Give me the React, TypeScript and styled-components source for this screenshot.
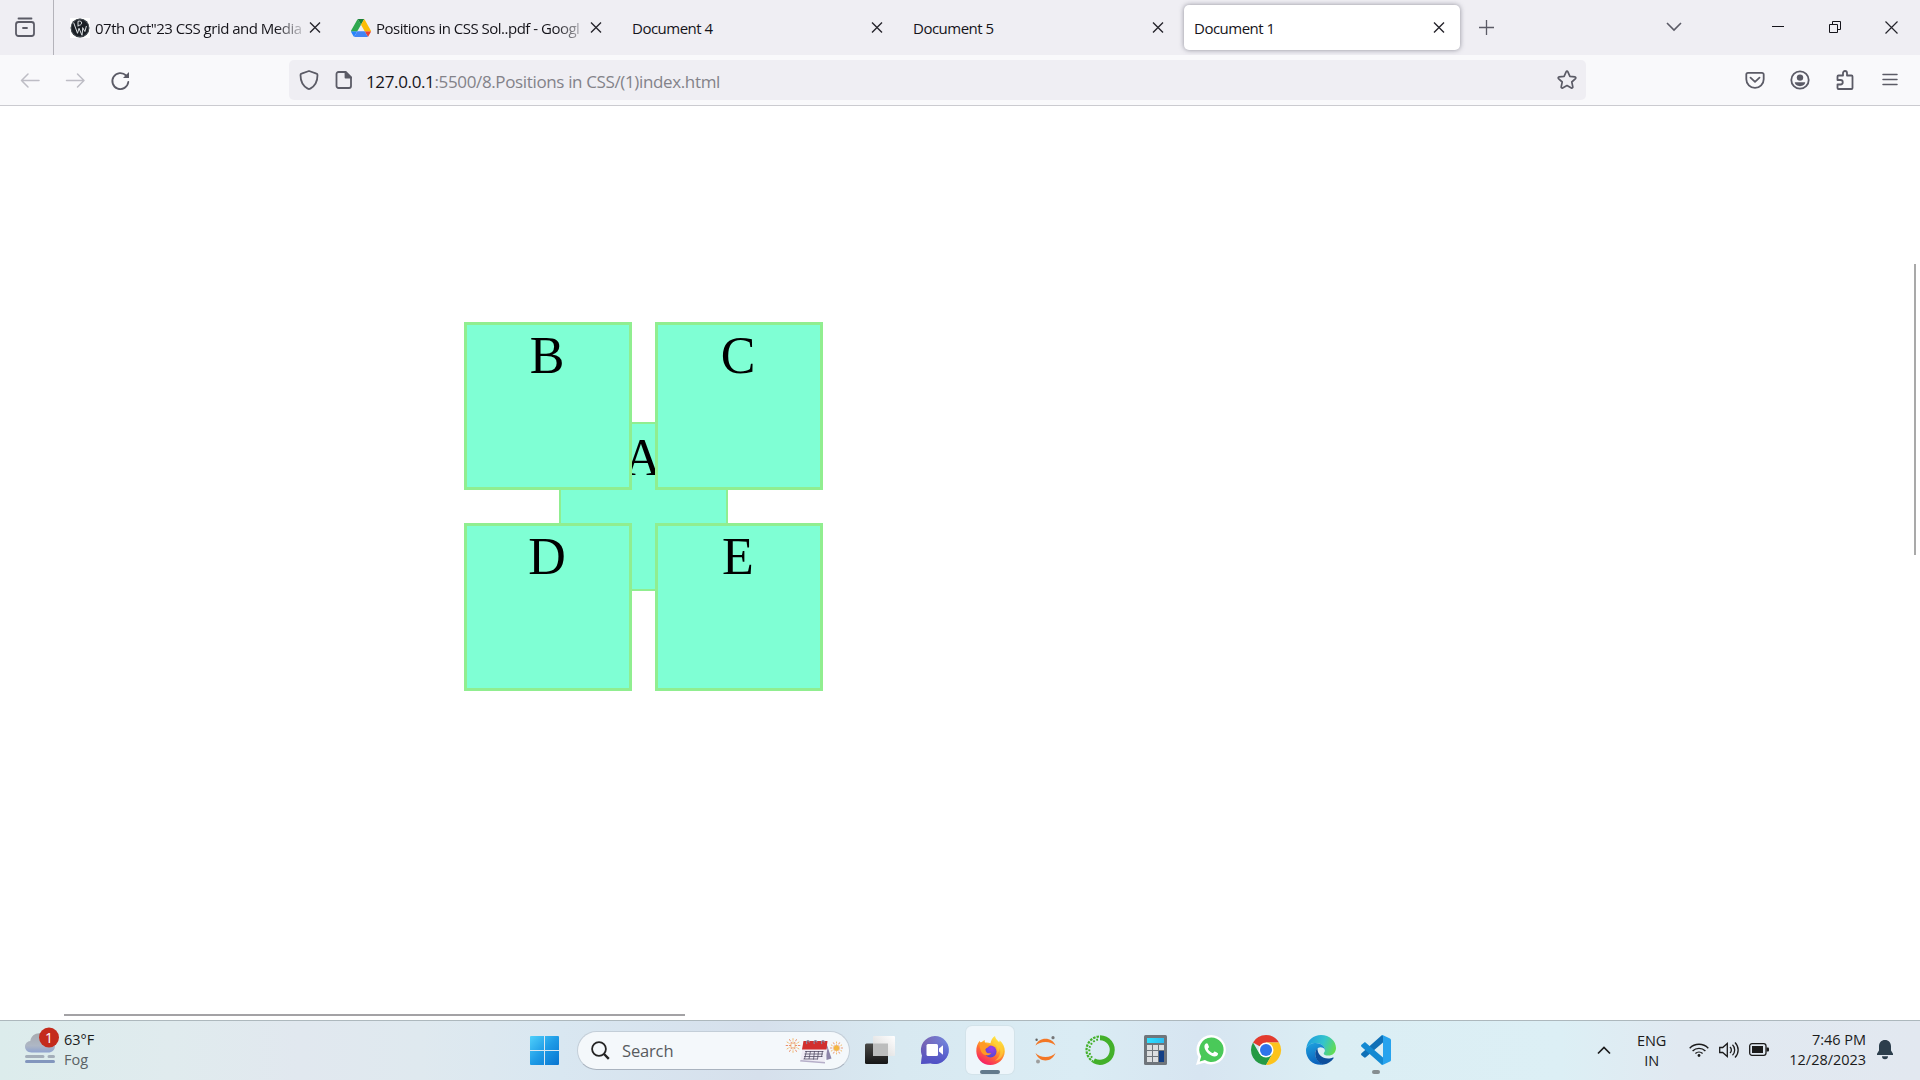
import React from "react";
import styled, { createGlobalStyle } from "styled-components";

const GlobalStyle = createGlobalStyle`
  * { box-sizing: border-box; }
  html, body { margin: 0; padding: 0; overflow: hidden; }
  body { font-family: "Segoe UI", "Open Sans", "Noto Sans", sans-serif; color: #15141a; }
  svg { display: block; flex: none; overflow: visible; }
`;

const Screen = styled.div`
  width: 1920px;
  height: 1080px;
  display: flex;
  flex-direction: column;
  background: #fff;
`;

/* ---------- tab strip ---------- */
const TabStrip = styled.div`
  height: 55px;
  flex: none;
  display: flex;
  background: #efeef3;
`;
const ViewButton = styled.div`
  width: 54px;
  height: 55px;
  padding: 17px 0 0 15px;
  border-right: 1px solid #b4b3ba;
`;
const Tabs = styled.div`
  display: flex;
  gap: 5px;
  padding: 5px 0 0 6px;
`;
const Tab = styled.div<{ $active?: boolean }>`
  width: 276px;
  height: 45px;
  padding: 0 15px 0 10px;
  display: flex;
  align-items: center;
  border-radius: 5px;
  background: ${(p) => (p.$active ? "#fff" : "transparent")};
  box-shadow: ${(p) => (p.$active ? "0 0 5px rgba(90, 90, 105, 0.65)" : "none")};
`;
const Favicon = styled.div`
  width: 20px;
  height: 20px;
  margin-right: 5px;
  flex: none;
`;
const TabTitle = styled.div<{ $fade?: boolean }>`
  flex: 1;
  min-width: 0;
  overflow: hidden;
  white-space: nowrap;
  font-size: 15px;
  line-height: 24px;
  padding-top: 1px;
  letter-spacing: -0.5px;
  mask-image: ${(p) => (p.$fade ? "linear-gradient(to left, transparent, #000 34px)" : "none")};
`;
const NewTab = styled.div`
  padding: 20px 0 0 19px;
`;
const WindowControls = styled.div`
  margin-left: auto;
  padding: 21px 22px 0 0;
  display: flex;
`;
const ControlSlot = styled.div<{ $gap: number }>`
  margin-right: ${(p) => p.$gap}px;
`;

/* ---------- navigation bar ---------- */
const NavBar = styled.div`
  height: 51px;
  flex: none;
  display: flex;
  align-items: flex-start;
  background: #f9f9fb;
  border-bottom: 1px solid #cbcbd0;
  padding: 5px 20px 0 20px;
`;
const NavButtons = styled.div`
  width: 269px;
  height: 40px;
  display: flex;
  align-items: center;
  gap: 25px;
`;
const UrlBar = styled.div`
  width: 1297px;
  height: 40px;
  display: flex;
  align-items: center;
  border-radius: 5px;
  background: #efeef3;
  padding: 0 9px 0 10px;
`;
const UrlText = styled.div`
  margin-left: 13px;
  flex: 1;
  padding-top: 2px;
  white-space: nowrap;
  font-size: 17px;
  letter-spacing: -0.36px;
  color: #838289;
  b { font-weight: 400; color: #15141a; }
`;
const UrlIcons = styled.div`
  display: flex;
  align-items: center;
  gap: 16px;
`;
const ToolButtons = styled.div`
  height: 40px;
  flex: 1;
  display: flex;
  align-items: center;
  justify-content: flex-end;
  gap: 25px;
`;

/* ---------- page ---------- */
const Page = styled.main`
  flex: 1;
  position: relative;
  padding: 216px 0 0 464px;
  background: #fff;
`;
const Board = styled.div`
  position: relative;
  display: grid;
  grid-template-columns: 168px 168px;
  grid-auto-rows: 168px;
  gap: 33px 23px;
`;
const Box = styled.div`
  position: relative;
  background: aquamarine;
  border: 3px solid lightgreen;
  padding: 2px 2px 0 0;
  font: 52px/58px "Times New Roman", "Liberation Serif", serif;
  color: #000;
  text-align: center;
`;
const CenterBox = styled(Box)`
  position: absolute;
  left: 95px;
  top: 100px;
  width: 169px;
  height: 169px;
  border-width: 2px;
  padding-top: 5px;
`;
const VerticalThumb = styled.div`
  position: absolute;
  right: 4px;
  top: 158px;
  width: 2px;
  height: 291px;
  background: #a9a9a9;
`;
const HorizontalThumb = styled.div`
  position: absolute;
  left: 64px;
  bottom: 4px;
  width: 621px;
  height: 2px;
  background: #a3a2a5;
`;

/* ---------- taskbar ---------- */
const Taskbar = styled.footer`
  height: 60px;
  flex: none;
  display: flex;
  align-items: flex-start;
  border-top: 1px solid #adb8bd;
  background: linear-gradient(90deg, #dcecec 0, #e0ebee 170px, #e1e8ef 300px, #dfe9ef 420px, #d9e7f1 560px, #d6e0ec 760px, #d8e9f1 900px, #daecf4 1080px, #d7e5f1 1200px, #dbeef4 1330px, #dceff5 1560px, #e1e9f1 1680px, #e2e8f0 1920px);
`;
const Weather = styled.div`
  width: 530px;
  padding: 6px 0 0 25px;
  display: flex;
  gap: 5px;
`;
const Lines = styled.div<{ $align?: string; $top?: number }>`
  padding-top: ${(p) => p.$top ?? 2}px;
  font-size: 14.5px;
  line-height: 20px;
  letter-spacing: -0.03px;
  text-align: ${(p) => p.$align ?? "left"};
  white-space: nowrap;
  color: #1b1b1b;
  span { display: block; }
`;
const Muted = styled.span`
  color: #5a6264;
`;
const Start = styled.div`
  padding: 15px 18px 0 0;
`;
const Search = styled.div`
  width: 273px;
  height: 39px;
  margin: 10px 2.5px 0 0;
  border-radius: 20px;
  border: 1px solid #c3ced8;
  border-bottom-color: #a9b3bf;
  background: #f4f8fb;
  display: flex;
  align-items: center;
  padding: 0 4px 1px 13px;
`;
const SearchText = styled.div`
  flex: 1;
  margin-left: 12px;
  padding-top: 1px;
  font-size: 16.5px;
  letter-spacing: -0.15px;
  color: #585b5e;
`;
const AppSlot = styled.div<{ $active?: boolean }>`
  position: relative;
  width: 48px;
  height: 48px;
  margin: 5px 3.55px 0;
  display: flex;
  align-items: center;
  justify-content: center;
  border-radius: 6px;
  background: ${(p) => (p.$active ? "#eef6fb" : "transparent")};
  box-shadow: ${(p) => (p.$active ? "0 0 0 1px #d3e3ea" : "none")};
`;
const Running = styled.div<{ $w: number; $c: string }>`
  position: absolute;
  left: calc(50% - ${(p) => p.$w / 2}px);
  bottom: 0;
  width: ${(p) => p.$w}px;
  height: 4px;
  border-radius: 2px;
  background: ${(p) => p.$c};
`;
const Tray = styled.div`
  margin-left: auto;
  padding-right: 27px;
  display: flex;
  align-items: center;
  height: 57px;
`;
const TrayItem = styled.div<{ $gap: number }>`
  margin-right: ${(p) => p.$gap}px;
`;

const CloseX = () => (
  <svg width="12" height="12" viewBox="0 0 12 12">
    <path d="M1 .5l10 10M11 .5L1 10.500" stroke="#25242b" strokeWidth="1.35" />
  </svg>
);

const WordFavicon = () => (
  <svg width="20" height="20" viewBox="0 0 20 20">
    <rect width="20" height="20" fill="#fff" />
    <circle cx="10" cy="10" r="9.4" fill="#1b2025" />
    <path d="M8 8.500V3.300c2.400-.7 3.900.1 3.600 1.900-.2 1.500-1.700 2.300-3.500 2.200M3.600 4.500l3.900 10.800 1.500-5 3 7 .8-7.500M12.500 9.500l2.400 4 1.500-5.500" fill="none" stroke="#dfe3e5" strokeWidth="1" />
    <circle cx="10" cy="10" r="8.8" fill="none" stroke="#626a70" strokeWidth=".6" />
  </svg>
);
const DriveFavicon = () => (
  <svg width="20" height="20" viewBox="0 0 87.3 78">
    <path d="m6.600 66.850 3.850 6.650c.8 1.400 1.950 2.500 3.300 3.300l13.750-23.800h-27.500c0 1.550.4 3.100 1.200 4.500z" fill="#2684fc" />
    <path d="m43.650 25-13.750-23.800c-1.350.8-2.500 1.900-3.300 3.300l-25.400 44a9.060 9.060 0 0 0 -1.200 4.500h27.500z" fill="#2fa84f" />
    <path d="m73.550 76.800c1.350-.8 2.500-1.900 3.300-3.300l1.600-2.750 7.650-13.250c.8-1.400 1.200-2.950 1.200-4.500h-27.502l5.852 11.500z" fill="#ea4335" />
    <path d="m43.650 25 13.750-23.800c-1.350-.8-2.900-1.200-4.500-1.200h-18.500c-1.600 0-3.150.45-4.500 1.200z" fill="#188038" />
    <path d="m59.800 53h-32.300l-13.750 23.800c1.350.8 2.900 1.200 4.500 1.200h50.800c1.600 0 3.150-.45 4.500-1.200z" fill="#4285f4" />
    <path d="m73.400 26.500-12.700-22c-.8-1.400-1.950-2.500-3.300-3.300l-13.750 23.800 16.150 28h27.450c0-1.550-.4-3.100-1.200-4.500z" fill="#fbbc04" />
  </svg>
);

const line = { fill: "none", stroke: "#5b5b66", strokeWidth: 1.8, strokeLinecap: "round", strokeLinejoin: "round" } as const;

const FogIcon = () => (
  <svg width="34" height="38" viewBox="0 0 34 38">
    <defs>
      <linearGradient id="fog" x1="0" y1="0" x2="0" y2="1"><stop offset="0" stopColor="#a7abb0" /><stop offset=".65" stopColor="#aeb7c5" /><stop offset="1" stopColor="#8ea2cf" /></linearGradient>
    </defs>
    <path d="M6.500 25.500C2.500 25.500 0 22.800 0 19.600c0-3 2.300-5.400 5.300-5.700C6 9.200 9.700 6.200 14.200 6.200c4.300 0 7.600 2.500 8.800 6.200 4.200.2 7 3 7 6.500 0 3.800-2.900 6.600-6.800 6.600z" fill="url(#fog)" />
    <path d="M1.500 29.500h16.500M24 29.500h4.500" stroke="#a3aeba" strokeWidth="3" strokeLinecap="round" />
    <path d="M1.500 34.500h27" stroke="#8296bd" strokeWidth="3" strokeLinecap="round" />
    <circle cx="24" cy="10.500" r="10" fill="#c42b1c" />
    <text x="24" y="15.800" textAnchor="middle" fontSize="14" fill="#fff" fontFamily="Open Sans, sans-serif">1</text>
  </svg>
);

const rays = Array.from({ length: 12 }, (_, i) => (i * Math.PI) / 6);
const Burst = ({ x, y, r }: { x: number; y: number; r: number }) => (
  <g strokeLinecap="round">
    {rays.map((a, i) => (
      <path
        key={i}
        d={`M${x + Math.cos(a) * r * 0.3} ${y + Math.sin(a) * r * 0.3}L${x + Math.cos(a) * r} ${y + Math.sin(a) * r}`}
        stroke={i % 2 ? "#f2b45e" : "#e8835f"}
        strokeWidth=".9"
        strokeDasharray="1.500 1.700"
      />
    ))}
  </g>
);
const CalendarArt = () => (
  <svg width="60" height="28" viewBox="0 0 60 28">
    <Burst x={8} y={9.500} r={7.200} />
    <path d="M41 6l5.500 16.500-5 1.500z" fill="#8d84a8" />
    <path d="M17.500 12.500h25l-3 13.500-24-2z" fill="#efecf5" />
    <path d="M15.500 24l24.500 2v1.500l-25-2z" fill="#b6afc9" />
    <path d="M18.500 5h24l-1 8.500H17z" fill="#d22f2f" />
    <path d="M20 15.500h18.500M19.500 18h18.500M19 20.500h18.500M18.500 23h14M21.500 15l-2 8M25.500 15l-1.500 8M29.500 15l-1 8.500M33.500 15l-1 8.500M37.500 15l-1 6" stroke="#4d4860" strokeWidth=".75" />
    <path d="M22 8c-2-3 2-5 2.500-1.500M29.500 8c-2-3 2-5 2.500-1.500M37 8c-2-3 2-5 2.500-1.500" fill="none" stroke="#8a86a0" strokeWidth="1.200" />
    <Burst x={51.500} y={12} r={6} />
    <circle cx="51.500" cy="12" r="2.600" fill="#f4b73f" />
  </svg>
);

const TaskViewIcon = () => (
  <svg width="30" height="28" viewBox="0 0 30 28">
    <defs>
      <linearGradient id="tv1" x1="0" y1="0" x2="0" y2="1"><stop offset="0" stopColor="#4a4a48" /><stop offset="1" stopColor="#161616" /></linearGradient>
      <linearGradient id="tv2" x1="0" y1="1" x2="1" y2="0"><stop offset="0" stopColor="#d5d5d5" /><stop offset="1" stopColor="#fff" /></linearGradient>
    </defs>
    <rect x="0" y="7.500" width="23" height="20.500" rx="1.500" fill="url(#tv1)" />
    <rect x="8" y="0" width="22" height="20" rx="1" fill="url(#tv2)" />
    <rect x="8" y="7.500" width="15" height="12.500" fill="#bcbdbd" />
  </svg>
);
const ChatIcon = () => (
  <svg width="28" height="28" viewBox="0 0 28 28">
    <defs>
      <linearGradient id="chat" x1="0" y1="0" x2="1" y2="0"><stop offset="0" stopColor="#7a62b0" /><stop offset="1" stopColor="#6f86e0" /></linearGradient>
      <linearGradient id="chat2" x1="0" y1="0" x2="0" y2="1"><stop offset=".2" stopColor="#4b4fc4" stopOpacity="0" /><stop offset="1" stopColor="#4f50c6" /></linearGradient>
    </defs>
    <path d="M14 0a14 14 0 1 1-4.500 27.300L0 28l1-8.500A14 14 0 0 1 14 0z" fill="url(#chat)" />
    <path d="M14 0a14 14 0 1 1-4.500 27.300L0 28l1-8.500A14 14 0 0 1 14 0z" fill="url(#chat2)" />
    <rect x="5.500" y="8" width="11.500" height="12" rx="1.500" fill="#fff" />
    <path d="M18 12.500l4-3.200v9.400l-4-3.200z" fill="#fff" />
  </svg>
);
const FirefoxIcon = () => (
  <svg width="29" height="29" viewBox="0 0 29 29">
    <defs>
      <linearGradient id="ff1" x1=".8" y1="0" x2=".25" y2="1"><stop offset="0" stopColor="#fff44f" /><stop offset=".35" stopColor="#ffb92b" /><stop offset=".62" stopColor="#ff6a36" /><stop offset="1" stopColor="#f5156c" /></linearGradient>
      <radialGradient id="ff2" cx=".6" cy=".25" r=".8"><stop offset="0" stopColor="#a23be8" /><stop offset="1" stopColor="#4a4cd0" /></radialGradient>
    </defs>
    <path d="M19 0c.3 2.600 2 4 4 6 .6-.4.700-1 .5-1.800 3.400 2.800 5.500 6.600 5.300 11.300C28.500 23.200 22 29 14.300 29 6.500 29 .5 23 .3 15.300.2 11.500 1.400 7.400 3.700 4.800c.2 1 .5 1.600 1 2.200C6.600 5 8.500 4 8.800 4c-.2 1-.1 1.800.3 2.500 2.200-.2 3.800 0 5.400.7C15 4 16.500 1.500 19 0z" fill="url(#ff1)" />
    <circle cx="14.500" cy="15.500" r="6" fill="url(#ff2)" />
    <path d="M3.700 6.500C6.500 5.700 9.500 6.500 11 8.500c1.600-.3 3 .4 3.500 1.300-1.500.3-2 .9-2.900 1.700-.8.600-2 1-2.200 1.900.4 3.600 3 4.600 5.900 3.500-1.400 2.500-5.200 3.200-8 1.300C4.600 16.200 3.200 11 3.700 6.500z" fill="#ff9a24" />
    <path d="M17 7.500c3.800 1.500 5.200 5.500 4.200 9.500 2-1.500 2.500-4 2-6 2.500 5 .5 11-4.500 13.500 7 0 10-7 7.500-13.500-2-1.500-5-3.500-7-6-.7.700-1.600 1.500-2.200 2.500z" fill="#ffd43a" opacity=".6" />
  </svg>
);
const JupyterIcon = () => (
  <svg width="21" height="28" viewBox="0 0 21 28">
    <path d="M.5 9.500C2.500 5 6 2.800 10.500 2.800S18.500 5 20.500 9.500C18 7.200 14.500 6 10.500 6S3 7.200.5 9.500zM.5 17c2.500 2.600 6 4 10 4s7.500-1.400 10-4c-2 4.800-5.500 7.500-10 7.500S2.500 21.800.5 17z" fill="#f37726" />
    <circle cx="18" cy="1.700" r="1.600" fill="#767677" /><circle cx="1.600" cy="3.700" r="1.200" fill="#616262" /><circle cx="3" cy="25.500" r="2" fill="#9e9e9e" />
  </svg>
);
const AnacondaIcon = () => (
  <svg width="30" height="30" viewBox="0 0 30 30">
    <path d="M15 2.700a12.300 12.300 0 1 1-6.300 22.900" fill="none" stroke="#43b02a" strokeWidth="5" />
    <path d="M14 1.500a13.500 13.500 0 0 0-6 25" fill="none" stroke="#43b02a" strokeWidth="2.200" strokeDasharray="2.500 1.100" />
    <path d="M13 4.500a11 11 0 0 0-5 19" fill="none" stroke="#43b02a" strokeWidth="2" strokeDasharray="1.800 1.700" />
  </svg>
);
const CalculatorIcon = () => (
  <svg width="23" height="30" viewBox="0 0 23 30">
    <defs><linearGradient id="calc" x1="0" y1="0" x2="1" y2="0"><stop offset="0" stopColor="#2ee0ff" /><stop offset="1" stopColor="#2bbcf0" /></linearGradient></defs>
    <rect width="23" height="30" rx="1.500" fill="#6f757b" />
    <rect x="3" y="3" width="17" height="5" fill="url(#calc)" />
    {[10, 16, 22].map((y) => [3, 9, 15].map((x) => (x === 15 && y > 10 ? null : <rect key={`${x}${y}`} x={x} y={y} width="5" height="5" fill="#dcdee0" />)))}
    <rect x="15" y="16" width="5" height="11" fill="#123f86" />
  </svg>
);
const WhatsAppIcon = () => (
  <svg width="30" height="30" viewBox="0 0 30 30">
    <path d="M15.200 0a14.700 14.700 0 1 1-6.900 27.700L0 30l2.400-8A14.700 14.700 0 0 1 15.200 0z" fill="#fff" />
    <path d="M15.200 2.600a12.200 12.200 0 1 1-6.300 22.500L3.700 26.400l1.500-5A12.200 12.200 0 0 1 15.200 2.600z" fill="#4ac959" />
    <path d="M11 8.200c-1.500 0-2.600 1.600-2.600 3.300 0 4.600 6 9.900 10.300 9.900 1.700 0 3.400-1.300 3.400-3 0-.4-3.100-2-3.500-2-.6 0-1.200 1.700-1.700 1.700-1.600 0-5-3.100-5-4.300 0-.5 1.100-1.100 1.100-1.700 0-.5-1.200-3.900-2-3.900z" fill="#fff" />
  </svg>
);
const ChromeIcon = () => (
  <svg width="30" height="30" viewBox="0 0 30 30">
    <path d="M15 15L2.010 7.500A15 15 0 0 1 28 7.500L15 7.500z" fill="#e33b2e" />
    <path d="M2.010 7.500A15 15 0 0 0 15 30l6.500-11.250L15 15l-6.500 3.750z" fill="#249a45" />
    <path d="M28 7.500A15 15 0 0 1 15 30l6.500-11.250L15 15V7.500z" fill="#fcc31c" />
    <circle cx="15" cy="15" r="7.500" fill="#fff" /><circle cx="15" cy="15" r="6" fill="#2f74ea" />
  </svg>
);
const EdgeIcon = () => (
  <svg width="30" height="30" viewBox="0 0 30 30">
    <defs>
      <linearGradient id="ed1" x1="0" y1=".3" x2="1" y2=".6"><stop offset="0" stopColor="#1f9ee0" /><stop offset=".55" stopColor="#34c4cc" /><stop offset="1" stopColor="#62dc50" /></linearGradient>
      <linearGradient id="ed2" x1="0" y1="0" x2=".3" y2="1"><stop offset="0" stopColor="#1fa4e0" /><stop offset="1" stopColor="#0a63bd" /></linearGradient>
    </defs>
    <path d="M.3 13C1.400 5 7.600 0 15 0c8.600 0 15 6 15 13 0 4.500-3.500 7.600-7.500 7.600-3.400 0-4.800-1.300-4.800-2.200 0-.8 1.200-1.200 1.200-3.500 0-4-4.200-7-9-7C5.500 7.900 2 10 .3 13z" fill="url(#ed1)" />
    <path d="M.3 13C2 9.500 5.800 7.900 9.800 7.900c5 0 9.100 3 9.100 7-1-2-2.700-2.600-4.400-2.600-3 0-5.300 3-5.300 6.700 0 5 4 8.800 8.800 10.500C8 31.500 0 24.500 0 15.500 0 14.500.1 13.700.3 13z" fill="url(#ed2)" />
    <path d="M11.500 13.300c-1.500 1.300-2.300 3.300-2.300 5.700 0 5.500 4.300 9.900 8.800 10.500 3.900-.7 7.500-3 9.600-6.200.3-.6-.2-1-.8-.7-1.200.6-2.800 1-4.600 1-6.400 0-11-4.600-10.700-10.300z" fill="#0d4f9c" />
  </svg>
);
const CodeIcon = () => (
  <svg width="30" height="30" viewBox="0 0 30 30">
    <path d="M22 7.500L4.800 22.300c-.6.500-1.300.5-1.800 0L.5 20.200c-.6-.5-.6-1.400 0-2L20.500.5 22 0z" fill="#0f70b7" />
    <path d="M22 22.500L4.800 7.700c-.6-.5-1.300-.5-1.800 0L.5 9.800c-.6.500-.6 1.400 0 2L20.500 29.500l1.500.5z" fill="#1389d2" />
    <path d="M21.500 0L29 3.400c.6.300 1 .9 1 1.600v20c0 .7-.4 1.300-1 1.600L21.500 30c-.8.100-1.300-.300-1.600-.700.9.6 2.100 0 2.100-1.200V1.900c0-1.200-1.200-1.800-2.100-1.200.3-.4.800-.8 1.600-.7z" fill="#27a3ee" />
  </svg>
);

const apps = [
  { icon: <TaskViewIcon /> },
  { icon: <ChatIcon /> },
  { icon: <FirefoxIcon />, active: true, bar: 20, color: "#627a8c" },
  { icon: <JupyterIcon /> },
  { icon: <AnacondaIcon /> },
  { icon: <CalculatorIcon /> },
  { icon: <WhatsAppIcon /> },
  { icon: <ChromeIcon /> },
  { icon: <EdgeIcon /> },
  { icon: <CodeIcon />, bar: 8, color: "#858d90" },
];

const tabs = [
  { title: "07th Oct\"23 CSS grid and Media", icon: <WordFavicon />, fade: true },
  { title: "Positions in CSS Sol..pdf - Googl", icon: <DriveFavicon />, fade: true },
  { title: "Document 4" },
  { title: "Document 5" },
  { title: "Document 1", active: true },
];

export default function App() {
  return (
    <Screen>
      <GlobalStyle />
      <TabStrip>
        <ViewButton>
          <svg width="20" height="20" viewBox="0 0 20 20" {...line}>
            <path d="M3.500 1.500h13" /><rect x="1" y="5" width="18" height="14" rx="2.500" /><path d="M8 11h4" />
          </svg>
        </ViewButton>
        <Tabs>
          {tabs.map((t) => (
            <Tab key={t.title} $active={t.active}>
              {t.icon && <Favicon>{t.icon}</Favicon>}
              <TabTitle $fade={t.fade}>{t.title}</TabTitle>
              <CloseX />
            </Tab>
          ))}
        </Tabs>
        <NewTab>
          <svg width="15" height="15" viewBox="0 0 15 15"><path d="M7.500 0v15M0 7.500h15" stroke="#5b5b66" strokeWidth="1.300" /></svg>
        </NewTab>
        <WindowControls>
          <ControlSlot $gap={90}>
            <svg width="16" height="12" viewBox="0 0 16 12"><path d="M1 2l7 7 7-7" fill="none" stroke="#5b5b66" strokeWidth="1.600" /></svg>
          </ControlSlot>
          <ControlSlot $gap={45}>
            <svg width="12" height="12" viewBox="0 0 12 12"><path d="M0 5.500h12" stroke="#15141a" /></svg>
          </ControlSlot>
          <ControlSlot $gap={44}>
            <svg width="12" height="12" viewBox="0 0 12 12" fill="none" stroke="#15141a"><path d="M.5 3.500h8v8h-8zM3.500 3.500v-3h8v8h-3" /></svg>
          </ControlSlot>
          <svg width="13" height="13" viewBox="0 0 13 13"><path d="M.5.5l12 12M12.500.5l-12 12" stroke="#25242b" strokeWidth="1.200" /></svg>
        </WindowControls>
      </TabStrip>

      <NavBar>
        <NavButtons>
          <svg width="20" height="20" viewBox="0 0 20 20" {...line} stroke="#bebdc5" strokeWidth={1.500}><path d="M19 10.500H1.500M8 4L1.500 10.500 8 17" /></svg>
          <svg width="20" height="20" viewBox="0 0 20 20" {...line} stroke="#bebdc5" strokeWidth={1.500}><path d="M1.500 10.500H19M12.500 4l6.500 6.500-6.500 6.500" /></svg>
          <svg width="20" height="20" viewBox="0 0 20 20" {...line}><path d="M18.300 12A8 8 0 1 1 16.100 5.500" /><path d="M19 2v6h-6z" fill="#5b5b66" stroke="none" /></svg>
        </NavButtons>
        <UrlBar>
          <UrlIcons>
            <svg width="20" height="20" viewBox="0 0 20 20" {...line}><path d="M10 1l7.500 2.600c.7.200 1 .8 1 1.400 0 6-2.500 11-7.200 13.600-.8.500-1.800.5-2.600 0C4 16 1.500 11 1.500 5c0-.6.300-1.200 1-1.400z" /></svg>
            <svg width="18" height="20" viewBox="0 0 18 20" {...line}><path d="M3.500 2h7l5.500 5.500V16a2 2 0 0 1-2 2H3.500a2 2 0 0 1-2-2V4a2 2 0 0 1 2-2z" /><path d="M10.500 2v5.500H16z" fill="#5b5b66" /></svg>
          </UrlIcons>
          <UrlText><b>127.0.0.1</b>:5500/8.Positions in CSS/(1)index.html</UrlText>
          <svg width="20" height="20" viewBox="0 0 20 20" {...line} strokeWidth={1.700}><path d="M9.100 1.800c.4-.8 1.400-.8 1.800 0l2 4.500 5 .6c.9.100 1.200 1.100.6 1.700l-3.700 3.400 1 4.900c.2.900-.7 1.500-1.400 1.100L10 15.600 5.600 18c-.7.400-1.600-.2-1.400-1.100l1-4.900L1.500 8.600c-.6-.6-.3-1.600.6-1.700l5-.6z" /></svg>
        </UrlBar>
        <ToolButtons>
          <svg width="20" height="20" viewBox="0 0 20 20" {...line}><path d="M3 2.800h14a1.700 1.700 0 0 1 1.700 1.700v4.700a8.700 8.700 0 0 1-17.400 0V4.500A1.700 1.700 0 0 1 3 2.800zM5.500 7.700L10 11.800l4.500-4.100" /></svg>
          <svg width="20" height="20" viewBox="0 0 20 20"><circle cx="10" cy="10" r="8.700" {...line} /><circle cx="10" cy="7.600" r="3.200" fill="#5b5b66" /><path d="M4.800 12.300h10.400c0 2.300-2.400 3.900-5.200 3.900s-5.200-1.600-5.200-3.900z" fill="#5b5b66" /></svg>
          <svg width="20" height="20" viewBox="0 0 20 20" {...line}><path d="M2.500 8V6.500a1 1 0 0 1 1-1H8V3a2 2 0 0 1 4 0v2.500h4.500a1 1 0 0 1 1 1V18a1 1 0 0 1-1 1h-13a1 1 0 0 1-1-1v-3.500h3a2 2 0 0 0 0-4.500h-3z" /></svg>
          <svg width="20" height="20" viewBox="0 0 20 20" {...line} strokeWidth={1.500}><path d="M3 4.500h14M3 9.500h14M3 14.500h14" /></svg>
        </ToolButtons>
      </NavBar>

      <Page>
        <Board>
          <CenterBox>A</CenterBox>
          <Box>B</Box>
          <Box>C</Box>
          <Box>D</Box>
          <Box>E</Box>
        </Board>
        <VerticalThumb />
        <HorizontalThumb />
      </Page>

      <Taskbar>
        <Weather>
          <FogIcon />
          <Lines $top={3}><span>63°F</span><Muted>Fog</Muted></Lines>
        </Weather>
        <Start>
          <svg width="29" height="29" viewBox="0 0 29 29">
            <defs><linearGradient id="win" gradientUnits="userSpaceOnUse" x1="0" y1="0" x2="29" y2="29"><stop offset="0" stopColor="#4fd0fb" /><stop offset=".5" stopColor="#1e9be6" /><stop offset="1" stopColor="#0874d0" /></linearGradient></defs>
            <path d="M1 0h13v14H0V1a1 1 0 0 1 1-1zM15 0h13a1 1 0 0 1 1 1v13H15zM0 15h14v14H1a1 1 0 0 1-1-1zM15 15h14v13a1 1 0 0 1-1 1H15z" fill="url(#win)" />
          </svg>
        </Start>
        <Search>
          <svg width="19" height="19" viewBox="0 0 19 19" fill="none" stroke="#232323"><circle cx="8" cy="8" r="6.900" strokeWidth="1.800" /><path d="M13 13l4.800 4.800" strokeWidth="2.400" /></svg>
          <SearchText>Search</SearchText>
          <CalendarArt />
        </Search>
        {apps.map((a, i) => (
          <AppSlot key={i} $active={a.active}>
            {a.icon}
            {a.bar && <Running $w={a.bar} $c={a.color!} />}
          </AppSlot>
        ))}
        <Tray>
          <TrayItem $gap={26}>
            <svg width="14" height="8" viewBox="0 0 14 8"><path d="M1 7.500l6-6 6 6" fill="none" stroke="#1b1b1b" strokeWidth="1.700" /></svg>
          </TrayItem>
          <TrayItem $gap={23}><Lines $align="center"><span>ENG</span><span>IN</span></Lines></TrayItem>
          <TrayItem $gap={10}>
            <svg width="20" height="16" viewBox="0 0 20 16" fill="none" stroke="#1b1b1b" strokeWidth="1.400"><path d="M.7 6.200a13 13 0 0 1 18.600 0M3.600 9a9 9 0 0 1 12.800 0M6.400 11.600a5.200 5.200 0 0 1 7.200 0" /><circle cx="10" cy="13.500" r="1.400" fill="#1b1b1b" stroke="none" /></svg>
          </TrayItem>
          <TrayItem $gap={10}>
            <svg width="20" height="16" viewBox="0 0 20 16" fill="none" stroke="#1b1b1b" strokeWidth="1.300"><path d="M.7 5.500h3L8.300 1.500v13L3.700 10.500h-3zM11 5a4 4 0 0 1 0 6M13.500 2.800a7.300 7.300 0 0 1 0 10.400M16 .5a10.500 10.500 0 0 1 0 15" /></svg>
          </TrayItem>
          <TrayItem $gap={20}>
            <svg width="20" height="13" viewBox="0 0 20 13"><rect x=".7" y=".7" width="16.300" height="11.600" rx="2.300" fill="none" stroke="#1b1b1b" strokeWidth="1.300" /><rect x="3" y="3" width="11" height="7" fill="#1b1b1b" /><path d="M17.500 4.500h1.500a1 1 0 0 1 1 1v2a1 1 0 0 1-1 1h-1.500z" fill="#1b1b1b" /></svg>
          </TrayItem>
          <TrayItem $gap={11}><Lines $align="right" $top={1}><span>7:46 PM</span><span>12/28/2023</span></Lines></TrayItem>
          <svg width="16" height="19" viewBox="0 0 16 19" fill="#2c3e4c"><path d="M8 0c3.600 0 6 2.700 6 6.200v4.300l2 3.300v1.200H0v-1.200l2-3.300V6.200C2 2.700 4.400 0 8 0zM5 16.300h6a3 3 0 0 1-6 0z" /></svg>
        </Tray>
      </Taskbar>
    </Screen>
  );
}
